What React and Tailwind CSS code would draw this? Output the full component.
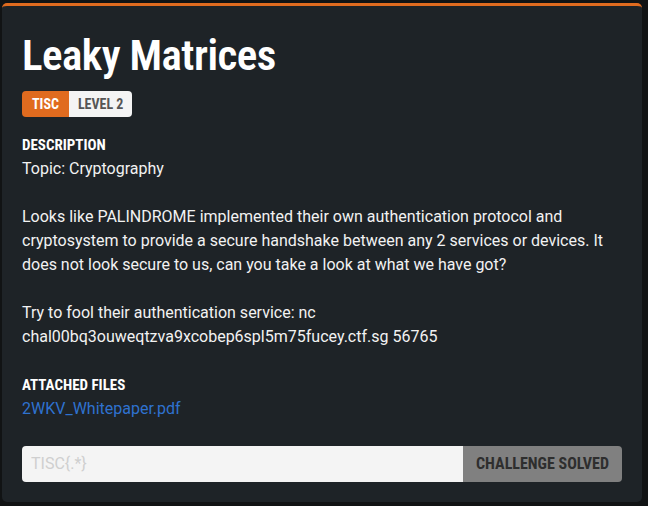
export default function App() {
  const cond = { fontFamily: 'Roboto,"Open Sans",sans-serif', fontStretch: "75%" };
  const body = "font-['Roboto','Liberation_Sans',sans-serif]";

  return (
    <div className="w-[648px] h-[506px] bg-[#111314] pt-[3px] pl-[2px] overflow-hidden">
      <div className="w-[640px] h-[499px] bg-[#1e2327] border-t-[3px] border-[#e06b1f] rounded-[5px] px-5 pt-[24px]">
        <h1 style={cond} className="text-white text-[43px] leading-[50px] font-semibold tracking-[-0.5px]">Leaky Matrices</h1>

        <div style={cond} className="mt-[11px] flex h-[26px] w-fit rounded-[4px] overflow-hidden text-[14px] font-bold">
          <span className="bg-[#e06b1f] text-white px-[10px] flex items-center">TISC</span>
          <span className="bg-[#f4f4f4] text-[#555] px-[9px] flex items-center">LEVEL 2</span>
        </div>

        <h2 style={cond} className="mt-[18px] text-white text-[15px] leading-[20px] font-bold">DESCRIPTION</h2>
        <div className={`${body} mt-[2px] text-[#f2f2f2] text-[16px] leading-[24px]`}>
          <p>Topic: Cryptography</p>
          <p className="mt-6">
            Looks like PALINDROME implemented their own authentication protocol and cryptosystem to provide a secure handshake between any 2 services or devices. It does not look secure to us, can you take a look at what we have got?
          </p>
          <p className="mt-6">
            Try to fool their authentication service: nc chal00bq3ouweqtzva9xcobep6spl5m75fucey.ctf.sg 56765
          </p>
        </div>

        <h2 style={cond} className="mt-[26px] text-white text-[15px] leading-[20px] font-bold">ATTACHED FILES</h2>
        <a className={`${body} block mt-[2px] text-[#2f72cf] text-[16px] leading-[24px]`}>2WKV_Whitepaper.pdf</a>

        <div className="mt-[25px] flex h-9 rounded-[4px] overflow-hidden">
          <input
            placeholder="TISC{.*}"
            className={`${body} flex-1 bg-[#f4f4f4] px-[9px] text-[16px] text-[#333] placeholder:text-[#cfcfcf] outline-none`}
          />
          <button style={cond} className="w-[159px] bg-[#808080] text-[#2e2e2e] text-[16px] font-bold">CHALLENGE SOLVED</button>
        </div>
      </div>
    </div>
  );
}
